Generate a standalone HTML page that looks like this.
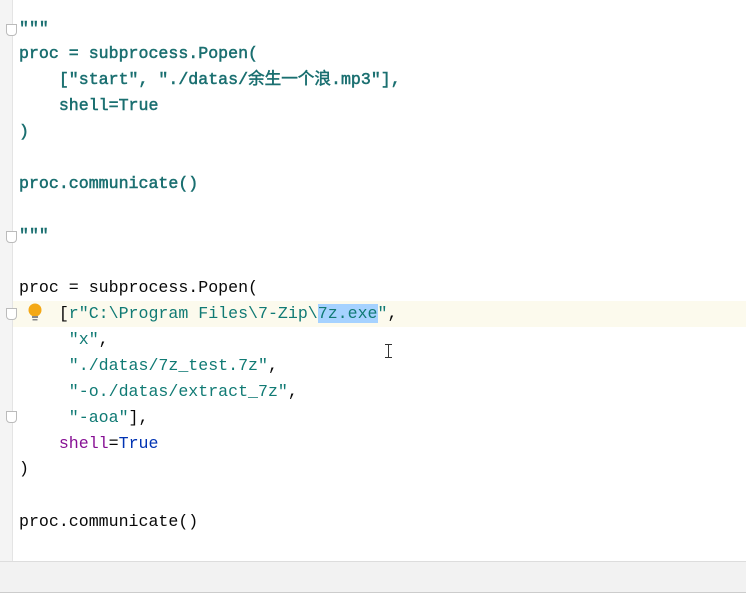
<!DOCTYPE html>
<html><head><style>
body{margin:0;width:746px;height:593px;background:#fff;overflow:hidden;position:relative;font-family:"Liberation Mono","Noto Sans CJK SC",monospace;font-size:16.6px}
.gut{position:absolute;left:0;top:0;width:12px;height:561px;background:#f4f4f4;border-right:1px solid #e4e4e4}
.bot{position:absolute;left:0;top:561px;width:746px;height:30px;background:#f2f2f2;border-top:1px solid #ddd;border-bottom:1px solid #ccc}
.hl{position:absolute;left:13px;top:301px;width:733px;height:26px;background:#fcfaed}
.l{position:absolute;left:19px;white-space:pre;line-height:26px;color:#080808}
.t{color:#1a6f70;-webkit-text-stroke:0.5px #1a6f70}
.s{color:#107a74}
.p{color:#871094}
.b{color:#0033b3}
.sel{background:#a6d2ff}
.fold{position:absolute;left:6px;width:9px;height:10px;border:1px solid #bbb;background:#fff;border-radius:0 0 4px 4px}
</style></head><body>
<div class="gut"></div>
<div class="hl"></div>
<div class="fold" style="top:24px"></div>
<div class="fold" style="top:231px"></div>
<div class="fold" style="top:308px"></div>
<div class="fold" style="top:411px"></div>
<div class="l t" style="top:16px">"""</div>
<div class="l t" style="top:41px">proc = subprocess.Popen(</div>
<div class="l t" style="top:67px">    ["start", "./datas/余生一个浪.mp3"],</div>
<div class="l t" style="top:93px">    shell=True</div>
<div class="l t" style="top:119px">)</div>
<div class="l t" style="top:171px">proc.communicate()</div>
<div class="l t" style="top:223px">"""</div>
<div class="l" style="top:275px">proc = subprocess.Popen(</div>
<svg style="position:absolute;left:26px;top:302px" width="18" height="20"><circle cx="9" cy="8" r="6.5" fill="#f4a814"/><rect x="6" y="14" width="6" height="2" fill="#888"/><rect x="6.5" y="17" width="5" height="1.5" fill="#888"/></svg>
<div class="l" style="top:301px">    [<span class="s">r"C:\Program Files\7-Zip\<span class="sel">7z.exe</span>"</span>,</div>
<div class="l" style="top:327px">     <span class="s">"x"</span>,</div>
<div class="l" style="top:353px">     <span class="s">"./datas/7z_test.7z"</span>,</div>
<div class="l" style="top:379px">     <span class="s">"-o./datas/extract_7z"</span>,</div>
<div class="l" style="top:405px">     <span class="s">"-aoa"</span>],</div>
<div class="l" style="top:431px">    <span class="p">shell</span>=<span class="b">True</span></div>
<div class="l" style="top:456px">)</div>
<div class="l" style="top:509px">proc.communicate()</div>
<div style="position:absolute;left:388px;top:344px;width:1px;height:14px;background:#333"></div>
<div style="position:absolute;left:385px;top:344px;width:7px;height:1px;background:#333"></div>
<div style="position:absolute;left:385px;top:357px;width:7px;height:1px;background:#333"></div>
<div class="bot"></div>
</body></html>
